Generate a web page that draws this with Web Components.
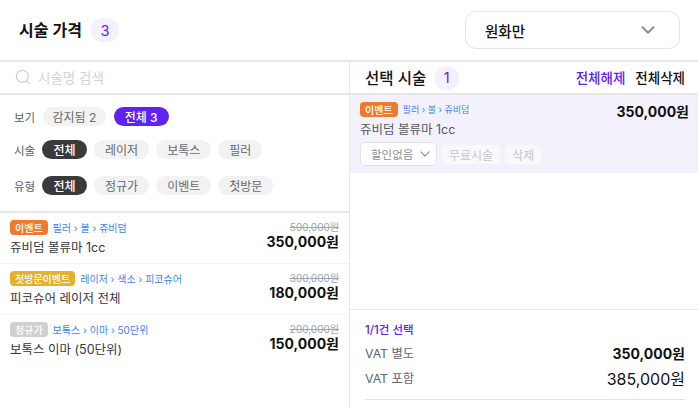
<!DOCTYPE html>
<html lang="ko">
<head>
<meta charset="utf-8">
<title>시술 가격</title>
<style>
  html, body { margin: 0; height: 100%; background: #fff; }
  body { font-family: Inter, "Noto Sans CJK KR", sans-serif; color: #111; overflow: hidden; }
</style>
</head>
<body>
<price-app></price-app>
<script>
(() => {
  const CHEVRON = (size, color, width) => `<svg width="${size}" height="${size}" viewBox="0 0 16 16" fill="none" stroke="${color}" stroke-width="${width}" stroke-linecap="round" stroke-linejoin="round"><path d="M2.5 5.2 8 10.8l5.5-5.6"/></svg>`;

  /** Define a shadow DOM element from a render function. */
  const define = (name, render) => {
    customElements.define(name, class extends HTMLElement {
      connectedCallback() {
        if (this.shadowRoot) return;
        this.attachShadow({ mode: 'open' }).innerHTML = render(this);
      }
    });
  };

  define('count-badge', (el) => `
    <style>
      :host { display: inline-flex; align-items: center; justify-content: center; width: var(--w, 28px); height: var(--h, 24px); border-radius: 12px; background: #f4f1fe; color: #5b21f0; font-size: 14.5px; font-weight: 400; }
    </style>
    <slot></slot>`);

  define('filter-chip', (el) => `
    <style>
      :host { display: inline-flex; align-items: center; justify-content: center; box-sizing: border-box; height: 19px; padding: 0 11px; border-radius: 10px; background: #f2f2f3; color: #666a70; font-size: 12px; white-space: nowrap; }
      :host([tone="violet"]) { background: #5f22f0; color: #fff; font-weight: 500; margin-left: 1px; }
      :host([tone="dark"]) { background: #3a3a3c; color: #fff; font-weight: 500; width: 45px; padding: 0; margin-left: -1px; }
      :host([tight]) { padding: 0 9.5px; }
    </style>
    <slot></slot>`);

  define('filter-row', (el) => `
    <style>
      :host { display: flex; align-items: center; gap: 7px; height: 19px; }
      .label { width: 22px; font-size: 11.5px; color: #565e6c; white-space: nowrap; }
    </style>
    <span class="label">${el.getAttribute('label')}</span><slot></slot>`);

  define('kind-tag', (el) => `
    <style>
      :host { display: inline-flex; align-items: center; box-sizing: border-box; height: 15px; padding: 0 5px; border-radius: 4px; color: #fff; font-size: 10px; font-weight: 500; white-space: nowrap; background: #f07a2b; }
      :host([tone="gold"]) { background: #e4b02f; }
      :host([tone="grey"]) { background: #d0d0d2; }
    </style>
    <slot></slot>`);

  define('price-item', (el) => `
    <style>
      :host { display: flex; justify-content: space-between; box-sizing: border-box; height: 51px; padding: 7px 10px 0 10px; border-bottom: 1px solid #f3f4f6; }
      .top { display: flex; align-items: center; gap: 5px; height: 15px; }
      .path { font-size: 10px; color: #3b82f6; white-space: nowrap; }
      .name { margin-top: 4px; font-size: 12.5px; line-height: 18px; color: #33363b; }
      .prices { text-align: right; }
      .old { font-size: 10px; line-height: 15px; color: #9ca3af; text-decoration: line-through; }
      .now { font-size: 14px; line-height: 18px; font-weight: 700; color: #111; margin-top: -2px; }
    </style>
    <div>
      <div class="top"><kind-tag tone="${el.getAttribute('tone') || ''}">${el.getAttribute('tag')}</kind-tag><span class="path">${el.getAttribute('path')}</span></div>
      <div class="name">${el.getAttribute('name')}</div>
    </div>
    <div class="prices">
      <div class="old">${el.getAttribute('old')}</div>
      <div class="now">${el.getAttribute('now')}</div>
    </div>`);

  define('top-bar', () => `
    <style>
      :host { display: flex; align-items: center; justify-content: space-between; box-sizing: border-box; height: 62px; padding: 0 18px 0 19px; border-bottom: 2px solid #e7e7e8; }
      .title { display: flex; align-items: center; gap: 9px; font-size: 16px; font-weight: 600; }
      .title span { margin-bottom: 2px; }
      .select { display: flex; align-items: center; justify-content: space-between; box-sizing: border-box; width: 215px; height: 38px; padding: 0 23px 0 19px; border: 1.5px solid #e5e5e6; border-radius: 11px; font-size: 14.5px; font-weight: 500; }
      svg { display: block; }
    </style>
    <div class="title"><span>시술 가격</span><count-badge>3</count-badge></div>
    <div class="select">원화만 ${CHEVRON(16, '#8b8d91', 2)}</div>`);

  define('left-pane', () => `
    <style>
      :host { display: flex; flex-direction: column; width: 350px; box-sizing: border-box; border-right: 1.5px solid #e7e7e8; }
      .search { display: flex; align-items: center; gap: 7px; box-sizing: border-box; height: 33px; padding: 0 0 1px 15px; border-bottom: 2px solid #e7e7e8; color: #d2d3d5; font-size: 13.5px; }
      svg { display: block; }
      .filters { display: flex; flex-direction: column; gap: 14px; box-sizing: border-box; height: 118px; padding: 12px 0 0 14px; border-bottom: 2px solid #e7e7e8; }
      filter-row:nth-child(3) { margin-top: 3px; }
    </style>
    <div class="search">
      <svg width="16" height="16" viewBox="0 0 16 16" fill="none" stroke="#cfd0d2" stroke-width="1.2" stroke-linecap="round"><circle cx="7.3" cy="7.3" r="6"/><path d="m11.8 11.8 3 3"/></svg>
      시술명 검색
    </div>
    <div class="filters">
      <filter-row label="보기"><filter-chip tight>감지됨 2</filter-chip><filter-chip tone="violet">전체 3</filter-chip></filter-row>
      <filter-row label="시술"><filter-chip tone="dark">전체</filter-chip><filter-chip>레이저</filter-chip><filter-chip>보톡스</filter-chip><filter-chip>필러</filter-chip></filter-row>
      <filter-row label="유형"><filter-chip tone="dark">전체</filter-chip><filter-chip>정규가</filter-chip><filter-chip>이벤트</filter-chip><filter-chip>첫방문</filter-chip></filter-row>
    </div>
    <price-item tag="이벤트" path="필러 › 볼 › 쥬비덤" name="쥬비덤 볼류마 1cc" old="500,000원" now="350,000원"></price-item>
    <price-item tone="gold" tag="첫방문이벤트" path="레이저 › 색소 › 피코슈어" name="피코슈어 레이저 전체" old="300,000원" now="180,000원"></price-item>
    <price-item tone="grey" tag="정규가" path="보톡스 › 이마 › 50단위" name="보톡스 이마 (50단위)" old="200,000원" now="150,000원" style="border-bottom:0"></price-item>`);

  define('selected-item', () => `
    <style>
      :host { display: block; box-sizing: border-box; height: 78px; padding: 7px 9px 0 10px; background: #f3f2fc; }
      .row { display: flex; justify-content: space-between; }
      .top { display: flex; align-items: center; gap: 5px; height: 15px; }
      .path { font-size: 9px; color: #3b82f6; }
      .price { font-size: 14px; font-weight: 700; line-height: 18px; margin-top: 1px; }
      .name { margin-top: 0; font-size: 12.5px; line-height: 18px; color: #55585d; }
      .tools { display: flex; align-items: center; gap: 5px; margin-top: 3px; }
      .select { display: flex; align-items: center; justify-content: space-between; box-sizing: border-box; width: 77px; height: 24px; padding: 0 5px 0 10px; border: 1.5px solid #e2e2e6; border-radius: 5px; background: #fff; color: #8b8d91; font-size: 11.5px; }
      .btn { display: flex; align-items: center; height: 19px; padding: 0 7px; border-radius: 4px; background: #f9f9fb; color: #c4c5c8; font-size: 12px; }
      svg { display: block; }
    </style>
    <div class="row">
      <div class="top"><kind-tag>이벤트</kind-tag><span class="path">필러 › 볼 › 쥬비덤</span></div>
      <div class="price">350,000원</div>
    </div>
    <div class="name">쥬비덤 볼류마 1cc</div>
    <div class="tools">
      <div class="select">할인없음 ${CHEVRON(12, '#85878b', 1.4)}</div>
      <div class="btn">무료시술</div>
      <div class="btn">삭제</div>
    </div>`);

  define('summary-panel', () => `
    <style>
      :host { display: block; box-sizing: border-box; padding: 12px 13px 9px 15px; border-top: 1.5px solid #e7e7e8; }
      .count { font-size: 11.5px; font-weight: 500; line-height: 16px; color: #5b21f0; margin-bottom: 2px; }
      .row { display: flex; align-items: center; justify-content: space-between; height: 25px; color: #5a6577; font-size: 12.3px; }
      b { font-size: 14px; font-weight: 700; color: #111; }
      .num { font-size: 16px; color: #111; }
      .rule { height: 1px; margin-top: 9px; background: #dfe4ea; }
    </style>
    <div class="count">1/1건 선택</div>
    <div class="row">VAT 별도 <b>350,000원</b></div>
    <div class="row">VAT 포함 <span class="num">385,000원</span></div>
    <div class="rule"></div>`);

  define('right-pane', () => `
    <style>
      :host { display: flex; flex-direction: column; flex: 1; min-width: 0; }
      .head { display: flex; align-items: center; justify-content: space-between; box-sizing: border-box; height: 33px; padding: 0 13px 0 15px; border-bottom: 2px solid #e7e7e8; }
      .title { display: flex; align-items: center; gap: 8px; font-size: 15.5px; font-weight: 500; --w: 25px; --h: 24px; }
      .title span { margin-bottom: 2px; }
      .actions { display: flex; gap: 10px; font-size: 13.5px; font-weight: 500; margin-bottom: 2px; }
      .violet { color: #5b21f0; }
      .space { flex: 1; }
    </style>
    <div class="head">
      <div class="title"><span>선택 시술</span><count-badge>1</count-badge></div>
      <div class="actions"><span class="violet">전체해제</span><span>전체삭제</span></div>
    </div>
    <selected-item></selected-item>
    <div class="space"></div>
    <summary-panel></summary-panel>`);

  define('price-app', () => `
    <style>
      :host { display: flex; flex-direction: column; width: 698px; height: 409px; overflow: hidden; }
      .body { display: flex; flex: 1; min-height: 0; }
    </style>
    <top-bar></top-bar>
    <div class="body"><left-pane></left-pane><right-pane></right-pane></div>`);
})();
</script>
</body>
</html>
